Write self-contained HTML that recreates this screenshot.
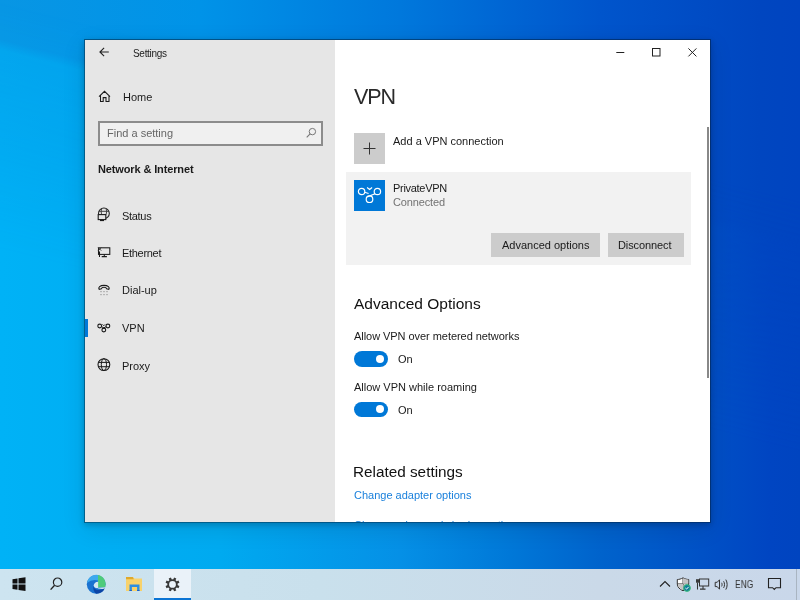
<!DOCTYPE html>
<html><head><meta charset="utf-8">
<style>
*{margin:0;padding:0;box-sizing:border-box}
html,body{width:800px;height:600px;overflow:hidden}
body{position:relative;font-family:"Liberation Sans",sans-serif;color:#1a1a1a;
background:linear-gradient(to right,#0896e4 0px,#0093e8 200px,#0078dc 400px,#0055cc 600px,#0046c0 760px,#0044c0 800px)}
#wb{position:absolute;left:0;top:0;width:800px;height:600px;
background:linear-gradient(to right,#00b2f6 0px,#00aaf0 220px,#0590e6 400px,#0078d8 510px,#0063cc 600px,#0045c2 770px,#0044c0 800px);
-webkit-mask-image:linear-gradient(194deg,rgba(0,0,0,0) 195px,rgba(0,0,0,.1) 232px,rgba(0,0,0,.57) 242px,rgba(0,0,0,.72) 325px,rgba(0,0,0,1) 440px)}
.t{position:absolute;white-space:nowrap;line-height:1;will-change:transform}
#win{position:absolute;left:84px;top:39px;width:627px;height:484px;border:1px solid rgba(0,20,40,.5);box-shadow:0 2px 6px rgba(0,0,0,.2),0 6px 22px rgba(0,0,0,.1)}
#side{position:absolute;left:0;top:0;width:250px;height:482px;background:#e6e6e6}
#main{position:absolute;left:250px;top:0;width:375px;height:482px;background:#fff;overflow:hidden}
#search{position:absolute;left:13px;top:81px;width:225px;height:25px;border:2px solid #8c8c8c;background:#f0f0f0}
#sel{position:absolute;left:0;top:279px;width:3px;height:18px;background:#0078d7}
.ic{position:absolute;overflow:visible}
#taskbar{position:absolute;left:0;top:569px;width:800px;height:31px;background:linear-gradient(to right,#cde4f0 0px,#c9e0ec 320px,#cad9e8 600px,#c9d7ea 800px)}
</style></head>
<body>
<div id="wb"></div>
<div id="win">
 <div id="side">
  <svg class="ic" style="left:14px;top:7px" width="12" height="12" viewBox="0 0 12 12"><path d="M9.8 5H1M5.1 0.8L0.9 5l4.2 4.2" fill="none" stroke="#222" stroke-width="1.1"/></svg>
  <div class="t" style="left:48px;top:9px;font-size:10px;color:#222;letter-spacing:-0.3px">Settings</div>
  <svg class="ic" style="left:14px;top:51px" width="12" height="12" viewBox="0 0 12 12"><path d="M0 5.6L5.5 0.3L11 5.6M1.5 4.2V10.5H4.2V6.6H7V10.5H10V4.2" fill="none" stroke="#1a1a1a" stroke-width="1.05"/></svg>
  <div class="t" style="left:38px;top:52px;font-size:11px">Home</div>
  <div id="search"></div>
  <div class="t" style="left:22px;top:88px;font-size:11px;color:#666">Find a setting</div>
  <svg class="ic" style="left:220px;top:87px" width="12" height="12" viewBox="0 0 12 12"><circle cx="7.4" cy="4.6" r="3.2" fill="none" stroke="#777" stroke-width="1"/><path d="M5.1 6.9L1.7 10.3" stroke="#777" stroke-width="1.1"/></svg>
  <div class="t" style="left:13px;top:124px;font-size:11px;font-weight:bold;letter-spacing:-0.13px">Network &amp; Internet</div>
  <div id="sel"></div>
  <!-- status icon -->
  <svg class="ic" style="left:12px;top:167px" width="14" height="14" viewBox="0 0 14 14"><circle cx="6.9" cy="6.4" r="5.4" fill="none" stroke="#222" stroke-width="1.05"/><path d="M4.8 1.6c-.8 2-.8 4 0 6M9 1.6c.8 2 .8 4 0 6M1.8 4.3h10.2" fill="none" stroke="#333" stroke-width=".9"/><rect x="1.2" y="7.6" width="7.6" height="5" fill="#e6e6e6" stroke="#1a1a1a" stroke-width="1.1"/><path d="M3 13.5h4" stroke="#1a1a1a" stroke-width="1.2"/></svg>
  <div class="t" style="left:37px;top:171px;font-size:11px;letter-spacing:-0.3px">Status</div>
  <!-- ethernet icon -->
  <svg class="ic" style="left:12px;top:206px" width="14" height="14" viewBox="0 0 14 14"><rect x="1.5" y="1.8" width="11.3" height="6.6" fill="none" stroke="#1a1a1a" stroke-width="1.05"/><path d="M7.3 8.4v2M4.7 10.6h5.2M2.5 5.5v5.5" stroke="#1a1a1a" stroke-width="1.05"/><path d="M1.2 1.6l3 3M4.2 1.6l-3 3" stroke="#333" stroke-width="1"/></svg>
  <div class="t" style="left:37px;top:208px;font-size:11px;letter-spacing:-0.3px">Ethernet</div>
  <!-- dial-up icon -->
  <svg class="ic" style="left:12px;top:244px" width="14" height="14" viewBox="0 0 14 14"><path d="M2.2 5.3C.8 3.5 3 1.4 7 1.4S13.2 3.5 11.8 5.3L9.7 4.8C9.4 3.8 8.6 3.3 7 3.3S4.6 3.8 4.3 4.8Z" fill="none" stroke="#1a1a1a" stroke-width="1.1"/><path d="M4 7v1.2M7 7v1.2M10 7v1.2M4 10v1.2M7 10v1.2M10 10v1.2" stroke="#888" stroke-width="1"/></svg>
  <div class="t" style="left:37px;top:245px;font-size:11px">Dial-up</div>
  <!-- vpn icon -->
  <svg class="ic" style="left:12px;top:281px" width="14" height="14" viewBox="0 0 14 14"><circle cx="2.7" cy="5" r="1.9" fill="none" stroke="#1a1a1a" stroke-width="1.1"/><circle cx="10.9" cy="5" r="1.9" fill="none" stroke="#1a1a1a" stroke-width="1.1"/><circle cx="6.8" cy="9" r="1.9" fill="none" stroke="#1a1a1a" stroke-width="1.1"/><path d="M4.5 5.6L8.2 7.8M9.1 5.6L5.4 7.8M5.5 3.4l1.3 1.3 1.3-1.3" fill="none" stroke="#1a1a1a" stroke-width="1"/></svg>
  <div class="t" style="left:37px;top:283px;font-size:11px">VPN</div>
  <!-- proxy icon -->
  <svg class="ic" style="left:12px;top:318px" width="14" height="14" viewBox="0 0 14 14"><circle cx="6.9" cy="6.6" r="5.9" fill="none" stroke="#1a1a1a" stroke-width="1.1"/><ellipse cx="6.9" cy="6.6" rx="2.6" ry="5.9" fill="none" stroke="#1a1a1a" stroke-width="1"/><path d="M1.3 4.4h11.2M1.3 8.7h11.2" fill="none" stroke="#1a1a1a" stroke-width="1"/></svg>
  <div class="t" style="left:37px;top:321px;font-size:11px">Proxy</div>
 </div>
 <div id="main">
  <svg class="ic" style="left:281px;top:8px" width="12" height="12" viewBox="0 0 12 12"><path d="M0.3 4.5h8" stroke="#222" stroke-width="1"/></svg>
  <svg class="ic" style="left:317px;top:8px" width="12" height="12" viewBox="0 0 12 12"><rect x="0.5" y="0.5" width="7.5" height="7.5" fill="none" stroke="#222" stroke-width="1"/></svg>
  <svg class="ic" style="left:353px;top:8px" width="12" height="12" viewBox="0 0 12 12"><path d="M0.4 0.4l8 8M8.4 0.4L0.4 8.4" stroke="#222" stroke-width="1"/></svg>
  <div class="t" style="left:19px;top:46.5px;font-size:21.5px;color:#2a2a2a;letter-spacing:-1.1px">VPN</div>
  <div style="position:absolute;left:19px;top:93px;width:31px;height:31px;background:#cccccc"></div>
  <svg class="ic" style="left:19px;top:93px" width="31" height="31" viewBox="0 0 31 31"><path d="M15.5 9.5v12M9.5 15.5h12" stroke="#333" stroke-width="1"/></svg>
  <div class="t" style="left:58px;top:96px;font-size:11px">Add a VPN connection</div>
  <div style="position:absolute;left:11px;top:132px;width:345px;height:93px;background:#f2f2f2"></div>
  <div style="position:absolute;left:19px;top:140px;width:31px;height:31px;background:#0078d7"></div>
  <svg class="ic" style="left:19px;top:140px" width="31" height="31" viewBox="0 0 31 31"><g fill="none" stroke="#fff" stroke-width="1.2"><circle cx="7.6" cy="11.5" r="3.2"/><circle cx="23.4" cy="11.5" r="3.2"/><circle cx="15.5" cy="19.2" r="3.3"/><path d="M21.1 13.7L13.2 16.9M10.7 12.2L14.6 13.5M16.9 15.2L17.8 16.8M13.1 7.6l2.5 1.9 2.5-1.9"/></g></svg>
  <div class="t" style="left:58px;top:143px;font-size:11px;letter-spacing:-0.3px">PrivateVPN</div>
  <div class="t" style="left:58px;top:157px;font-size:11px;color:#737373;letter-spacing:-0.15px">Connected</div>
  <div style="position:absolute;left:156px;top:193px;width:109px;height:24px;background:#cccccc"></div>
  <div style="position:absolute;left:273px;top:193px;width:76px;height:24px;background:#cccccc"></div>
  <div class="t" style="left:167px;top:200px;font-size:11px">Advanced options</div>
  <div class="t" style="left:283px;top:200px;font-size:11px;letter-spacing:-0.1px">Disconnect</div>
  <div class="t" style="left:19px;top:256px;font-size:15.5px;color:#111">Advanced Options</div>
  <div class="t" style="left:19px;top:291px;font-size:11px;letter-spacing:-0.05px">Allow VPN over metered networks</div>
  <div style="position:absolute;left:19px;top:311px;width:34px;height:16px;border-radius:8px;background:#0078d7"></div>
  <div style="position:absolute;left:41px;top:314.5px;width:8px;height:8px;border-radius:50%;background:#fff"></div>
  <div class="t" style="left:63px;top:314px;font-size:11px">On</div>
  <div class="t" style="left:19px;top:342px;font-size:11px">Allow VPN while roaming</div>
  <div style="position:absolute;left:19px;top:361.5px;width:34px;height:15.5px;border-radius:8px;background:#0078d7"></div>
  <div style="position:absolute;left:41px;top:365px;width:8px;height:8px;border-radius:50%;background:#fff"></div>
  <div class="t" style="left:63px;top:365px;font-size:11px">On</div>
  <div class="t" style="left:18px;top:424px;font-size:15.3px;color:#111">Related settings</div>
  <div class="t" style="left:19px;top:450px;font-size:11px;color:#1a80dc">Change adapter options</div>
  <div class="t" style="left:19px;top:480px;font-size:11px;color:#1a80dc">Change advanced sharing options</div>
  <div style="position:absolute;left:372px;top:87px;width:2px;height:251px;background:#888"></div>
 </div>
</div>
<div id="taskbar">
  <svg class="ic" style="left:12px;top:8px" width="14" height="14" viewBox="0 0 14 14"><path d="M0.5 2.2L5.5 1.5V6.6H0.5ZM6.5 1.3L13.5 0.3V6.6H6.5ZM0.5 7.6H5.5V12.7L0.5 12ZM6.5 7.6H13.5V13.9L6.5 12.9Z" fill="#111"/></svg>
  <svg class="ic" style="left:49px;top:7px" width="16" height="16" viewBox="0 0 16 16"><circle cx="8.6" cy="6.2" r="4.2" fill="none" stroke="#222" stroke-width="1.2"/><path d="M5.6 9.2L1.6 13.6" stroke="#222" stroke-width="1.4"/></svg>
  <!-- edge -->
  <svg class="ic" style="left:86px;top:5px" width="20" height="20" viewBox="0 0 20 20">
    <circle cx="10.2" cy="10.3" r="9.4" fill="#1a72d0"/>
    <path d="M0.9 9A9.4 9.4 0 0 1 12.2 1.1V6.5Q6 4.8 0.9 9Z" fill="#3eaaee"/>
    <path d="M12 1.1A9.4 9.4 0 0 1 19.3 13.2L12 13.6Z" fill="#4ecb7b"/>
    <path d="M12.1 7.8C9.3 7.8 7.7 9.8 7.7 11.5C7.7 13.3 9.6 14.3 12.1 14.1Z" fill="#d5e8f2"/>
    <path d="M12 13.8L19.2 13.3Q18.9 14.3 18.5 14.8Q15 15.3 12 14.5Z" fill="#cfe3ef"/>
    <path d="M7.2 12Q8.6 16.3 13 16Q16.5 15.6 18.7 14.6Q16.5 19.6 10.5 19.7Q7.2 18.5 7.2 12Z" fill="#0c45a6"/>
  </svg>
  <!-- folder -->
  <svg class="ic" style="left:125px;top:7px" width="18" height="16" viewBox="0 0 18 16"><path d="M1 1h7l1.5 1.5H17V15H1Z" fill="#f8d26b"/><path d="M1 1h6.8l1 2.2H1Z" fill="#dfa92b"/><path d="M4.5 15V8.5h10V15h-2.4v-4h-5.2v4Z" fill="#2b8ee3"/><path d="M4.5 14v1h2.4v-1ZM12.1 14v1h2.4v-1Z" fill="#1c62c8"/></svg>
  <div style="position:absolute;left:154px;top:0;width:37px;height:31px;background:#eaf2f9"></div>
  <div style="position:absolute;left:154px;top:29px;width:37px;height:2px;background:#0b74d4"></div>
  <!-- gear -->
  <svg class="ic" style="left:165px;top:8px" width="15" height="15" viewBox="0 0 15 15"><g transform="translate(7.5 7.4)"><circle r="4.3" fill="none" stroke="#383838" stroke-width="1.8"/><g fill="#383838"><rect x="-1.2" y="-7" width="2.4" height="3" transform="rotate(22.5)"/><rect x="-1.2" y="-7" width="2.4" height="3" transform="rotate(67.5)"/><rect x="-1.2" y="-7" width="2.4" height="3" transform="rotate(112.5)"/><rect x="-1.2" y="-7" width="2.4" height="3" transform="rotate(157.5)"/><rect x="-1.2" y="-7" width="2.4" height="3" transform="rotate(202.5)"/><rect x="-1.2" y="-7" width="2.4" height="3" transform="rotate(247.5)"/><rect x="-1.2" y="-7" width="2.4" height="3" transform="rotate(292.5)"/><rect x="-1.2" y="-7" width="2.4" height="3" transform="rotate(337.5)"/></g></g></svg>
  <!-- tray -->
  <svg class="ic" style="left:659px;top:11px" width="12" height="8" viewBox="0 0 12 8"><path d="M1 6.5L6 1.5l5 5" fill="none" stroke="#222" stroke-width="1.1"/></svg>
  <svg class="ic" style="left:676px;top:8px" width="15" height="15" viewBox="0 0 15 15"><path d="M7 .8C5 2 3 2.5 1.3 2.5v4.5c0 3 2.5 5.5 5.7 6.7 3.2-1.2 5.7-3.7 5.7-6.7V2.5C11 2.5 9 2 7 .8Z" fill="#fff" stroke="#333" stroke-width="1"/><path d="M7 1v12.5M1.3 6.8h11.4" stroke="#333" stroke-width=".9"/><path d="M7 1.3v5.5h5.2V2.8C10.2 2.6 8.5 2.2 7 1.3Z" fill="#c4c4c4"/><path d="M1.8 6.8H7v6.3C4 11.8 2 9.6 1.8 7Z" fill="#c4c4c4"/><circle cx="11" cy="11" r="3.4" fill="#0f7d9a" stroke="#3fc17a" stroke-width="1"/><path d="M9.4 11l1.2 1.1 2-2.2" fill="none" stroke="#fff" stroke-width="1"/></svg>
  <svg class="ic" style="left:695px;top:9px" width="15" height="13" viewBox="0 0 15 13"><rect x="4.5" y="1" width="9.2" height="7" fill="none" stroke="#333" stroke-width="1"/><path d="M8 8v2.6M5 11.1h5.5M2.5 4.5v7" stroke="#333" stroke-width="1.05"/><rect x="1" y="1.2" width="3.2" height="3.5" fill="#3a3a3a"/></svg>
  <svg class="ic" style="left:714px;top:9px" width="15" height="13" viewBox="0 0 15 13"><path d="M1.2 4.3h2L5.5 1.8v9.4L3.2 8.6H1.2Z" fill="none" stroke="#333" stroke-width="1"/><path d="M7.6 4.8c.6 1 .6 2.6 0 3.6M9.6 3.3c1.2 1.8 1.2 4.8 0 6.6M11.8 1.6c1.8 2.8 1.8 7.2 0 10" fill="none" stroke="#333" stroke-width="1"/></svg>
  <div class="t" style="left:735px;top:11px;font-size:10px;color:#333;transform:scaleX(.84);transform-origin:0 0">ENG</div>
  <svg class="ic" style="left:767px;top:8px" width="15" height="15" viewBox="0 0 15 15"><path d="M1.5 1.5h12v9.2H9l-1.7 1.8-1.7-1.8H1.5Z" fill="none" stroke="#222" stroke-width="1.1"/></svg>
  <div style="position:absolute;left:796px;top:0;width:1px;height:31px;background:#a9b5c2"></div>
</div>
</body></html>
